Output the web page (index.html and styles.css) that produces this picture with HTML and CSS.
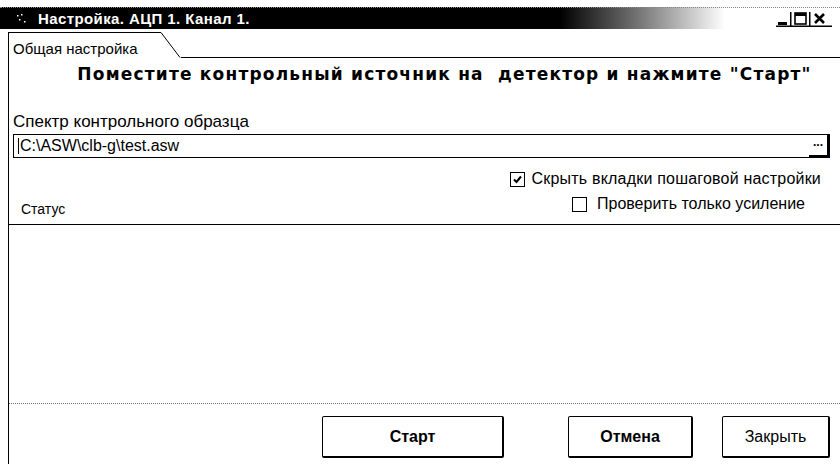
FILE: index.html
```html
<!DOCTYPE html>
<html lang="ru">
<head>
<meta charset="utf-8">
<title>Настройка. АЦП 1. Канал 1.</title>
<link rel="stylesheet" href="styles.css">
</head>
<body>
<div class="titlebar">
  <svg class="app-icon" width="12" height="12" viewBox="0 0 12 12">
    <rect x="1" y="2" width="1.5" height="1.5" fill="#fff"/>
    <rect x="5" y="1" width="1.5" height="1.5" fill="#fff"/>
    <rect x="3" y="6" width="1.5" height="1.5" fill="#fff"/>
    <rect x="8" y="8" width="1.5" height="1.5" fill="#fff"/>
  </svg>
  <span class="title">Настройка. АЦП 1. Канал 1.</span>
  <div class="controls">
    <svg width="56" height="16" viewBox="0 0 56 16">
      <rect x="2" y="11" width="9" height="3" fill="#000"/>
      <rect x="14" y="1" width="1.5" height="14" fill="#000"/>
      <rect x="19" y="2" width="11" height="11" fill="none" stroke="#000" stroke-width="1.6"/>
      <rect x="19" y="2" width="11" height="3" fill="#000"/>
      <rect x="33" y="1" width="1.5" height="14" fill="#000"/>
      <path d="M39 3 L48 12 M48 3 L39 12" stroke="#000" stroke-width="2.6"/>
      <rect x="0" y="14.5" width="56" height="1.5" fill="#000"/>
    </svg>
  </div>
</div>

<div class="frame">
  <div class="tabstrip">
    <div class="tab">Общая настройка</div>
    <svg class="tab-edge" width="24" height="26" viewBox="0 0 24 26" preserveAspectRatio="none">
      <path d="M0 0.5 L4 0.5 L23 25.5" fill="none" stroke="#000" stroke-width="1"/>
    </svg>
    <div class="tab-rest"></div>
  </div>

  <div class="page">
    <h1 class="prompt">Поместите контрольный источник на&nbsp; детектор и нажмите "Старт"</h1>

    <label class="field-label">Спектр контрольного образца</label>
    <div class="filebox">
      <span class="caret"></span>
      <span class="path">C:\ASW\clb-g\test.asw</span>
      <span class="browse">...</span>
    </div>

    <div class="options">
      <div class="option option-hide">
        <span class="check checked">
          <svg width="11" height="11" viewBox="0 0 11 11"><path d="M2 5.5 L4.5 8 L9 2.5" fill="none" stroke="#000" stroke-width="2"/></svg>
        </span>
        <span>Скрыть вкладки пошаговой настройки</span>
      </div>
      <div class="status-row">
        <span class="status-label">Статус</span>
        <div class="option option-gain">
          <span class="check"></span>
          <span>Проверить только усиление</span>
        </div>
      </div>
    </div>
  </div>

  <div class="status-area"></div>

  <div class="buttons">
    <button class="btn btn-start">Старт</button>
    <button class="btn btn-cancel">Отмена</button>
    <button class="btn btn-close">Закрыть</button>
  </div>
</div>
</body>
</html>
```

FILE: styles.css
```css
* { box-sizing: border-box; }

html, body {
  margin: 0;
  width: 840px;
  height: 464px;
  overflow: hidden;
  background: #fff;
  color: #000;
  font-family: "Liberation Sans", Arial, sans-serif;
}

body {
  display: flex;
  flex-direction: column;
}

/* caption bar fading from black into white */
.titlebar {
  margin-top: 7px;
  height: 22px;
  display: flex;
  align-items: center;
  background: linear-gradient(to right, #000 0, #000 560px, #777 640px, #fff 725px);
  border-top: 1px dotted #888;
}

.app-icon {
  margin-left: 16px;
  margin-right: 10px;
}

.title {
  color: #fff;
  font-weight: bold;
  font-size: 15px;
  letter-spacing: 0.4px;
}

.controls {
  margin-left: auto;
  margin-right: 8px;
  display: flex;
  align-items: center;
}

/* dialog frame */
.frame {
  flex: 1;
  margin-left: 8px;
  border-left: 1px solid #000;
  display: flex;
  flex-direction: column;
  margin-top: 3px;
}

.tabstrip {
  display: flex;
  height: 26px;
}

.tab {
  border-top: 1px solid #000;
  padding: 7px 0 0 4px;
  font-size: 15px;
  width: 148px;
  white-space: nowrap;
}

.tab-edge {
  display: block;
  flex: none;
}

.tab-rest {
  flex: 1;
  border-bottom: 1px solid #000;
}

.page {
  padding: 0 10px 0 4px;
}

.prompt {
  margin: 6px 0 0;
  text-align: center;
  font-family: "DejaVu Sans", sans-serif;
  font-size: 17px;
  font-weight: bold;
  letter-spacing: 1.2px;
  padding-left: 46px;
  white-space: nowrap;
}

.field-label {
  display: block;
  margin-top: 28px;
  font-size: 17px;
}

.filebox {
  margin-top: 2px;
  height: 24px;
  border: 1px solid #000;
  display: flex;
  align-items: center;
  font-size: 16px;
}

.caret {
  width: 1px;
  height: 16px;
  background: #000;
  margin-left: 4px;
}

.path {
  margin-left: 1px;
}

.browse {
  margin-left: auto;
  width: 20px;
  height: 100%;
  border-right: 2px solid #000;
  border-bottom: 2px solid #000;
  font-weight: bold;
  font-size: 12px;
  line-height: 14px;
  text-align: center;
}

.options {
  font-size: 16px;
}

.option {
  display: flex;
  align-items: center;
}

.option-hide {
  margin-top: 12px;
  justify-content: flex-end;
  padding-right: 9px;
  gap: 6px;
  letter-spacing: 0.2px;
}

.status-row {
  display: flex;
  align-items: center;
  margin-top: 3px;
}

.status-label {
  margin-left: 8px;
  margin-top: 10px;
  font-size: 14px;
}

.option-gain {
  margin-left: auto;
  margin-right: 25px;
  gap: 10px;
}

.check {
  width: 15px;
  height: 15px;
  border: 1px solid #000;
  display: inline-flex;
  align-items: center;
  justify-content: center;
}

/* empty status log */
.status-area {
  margin-top: 7px;
  border-top: 1px solid #000;
  height: 180px;
  border-bottom: 1px dotted #777;
}

.buttons {
  display: flex;
  padding-top: 12px;
}

.btn {
  height: 42px;
  background: #fff;
  border: 1px solid #000;
  border-right-width: 2px;
  border-bottom-width: 2px;
  border-radius: 2px;
  font-family: inherit;
  font-size: 16px;
  color: #000;
  padding: 0;
}

.btn-start {
  margin-left: 313px;
  width: 182px;
  font-weight: bold;
}

.btn-cancel {
  margin-left: 64px;
  width: 125px;
  font-weight: bold;
}

.btn-close {
  margin-left: 29px;
  width: 108px;
}
```
